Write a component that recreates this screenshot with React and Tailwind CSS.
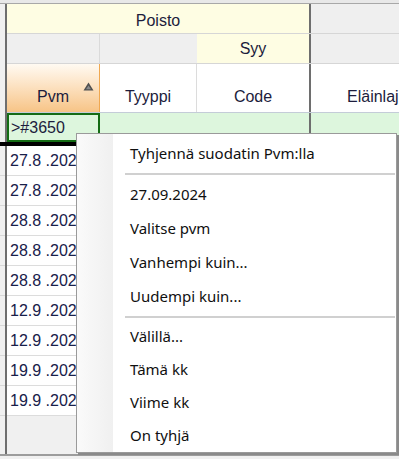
import React from "react";

const rows = [
  "27.8 .202",
  "27.8 .202",
  "28.8 .202",
  "28.8 .202",
  "28.8 .202",
  "12.9 .202",
  "12.9 .202",
  "19.9 .202",
  "19.9 .202",
];

const MenuItem = ({ label, h }) => (
  <div className={`flex items-center pl-[53px] ${h}`}>{label}</div>
);

const Separator = () => (
  <div className="flex h-[7px] items-center pl-[48px] pr-[1px]">
    <div className="h-[2px] w-full bg-[#d0d0d0]" />
  </div>
);

export default function App() {
  return (
    <div className="relative h-[459px] w-[399px] overflow-hidden bg-[#f0f0f0] font-['Liberation_Sans',Arial,sans-serif] text-[16px] text-[#1c1c3c]">
      {/* top strip */}
      <div className="h-[4px] bg-[#e8e8e8] border-b border-[#a8a8a8]" />

      <div className="flex">
        {/* row header column */}
        <div className="w-[5px] shrink-0" />
        <div className="w-[2px] shrink-0 bg-[#6e6e6e]" />

        <div className="flex-1">
          {/* group header row */}
          <div className="flex h-[30px] border-b border-[#d6d6d6]">
            <div className="flex w-[302px] items-center justify-center bg-[#fefde3] pt-[4px]">
              Poisto
            </div>
            <div className="w-[2px] bg-[#6e6e6e]" />
            <div className="flex-1 bg-[#efefef]" />
          </div>

          {/* sub header row */}
          <div className="flex h-[30px] border-b border-[#d6d6d6]">
            <div className="w-[93px] border-r border-[#dadada] bg-[#efefef]" />
            <div className="w-[97px] bg-[#efefef]" />
            <div className="flex w-[112px] items-center justify-center bg-[#fefde3]">
              Syy
            </div>
            <div className="w-[2px] bg-[#6e6e6e]" />
            <div className="flex-1 bg-[#efefef]" />
          </div>

          {/* column header row */}
          <div className="flex h-[49px] border-b border-[#c4ccd8]">
            <div className="relative flex w-[93px] items-end justify-center border-r border-[#f0a850] bg-gradient-to-b from-[#fffaf2] to-[#f7c486] pb-[3px]">
              Pvm
              <svg
                className="absolute right-[5px] top-[18px]"
                width="11"
                height="9"
                viewBox="0 0 11 9"
              >
                <polygon points="5.5,0.5 10.5,8.5 0.5,8.5" fill="#4f4f4f" />
                <polygon points="5.5,3.5 8,7.2 3,7.2" fill="#8a8a8a" />
              </svg>
            </div>
            <div className="flex w-[97px] items-end justify-center border-r border-[#dcdcdc] bg-white pb-[3px]">
              Tyyppi
            </div>
            <div className="flex w-[112px] items-end justify-center bg-white pb-[3px]">
              Code
            </div>
            <div className="w-[2px] bg-[#6e6e6e]" />
            <div className="flex flex-1 items-end overflow-hidden whitespace-nowrap bg-white pb-[3px] pl-[36px]">
              Eläinlaji
            </div>
          </div>

          {/* filter row */}
          <div className="flex h-[29px] bg-[#ddf6dd]">
            <div className="flex w-[93px] items-center border-2 border-[#146c14] pl-[2px] leading-none">
              &gt;#3650
            </div>
            <div className="w-[97px]" />
            <div className="w-[112px]" />
            <div className="w-[2px] bg-[#6e6e6e]" />
            <div className="flex-1" />
          </div>
        </div>
      </div>

      {/* thick separator */}
      <div className="h-[4px] bg-black" />

      {/* data rows */}
      <div className="flex">
        <div className="w-[5px] shrink-0">
          {rows.map((r, i) => (
            <div key={i} className="h-[30px] border-b border-[#d8d8d8]" />
          ))}
        </div>
        <div className="w-[2px] shrink-0 bg-[#6e6e6e]" />
        <div className="flex-1 bg-white">
          {rows.map((r, i) => (
            <div
              key={i}
              className="flex h-[30px] items-center border-b border-[#dcdcdc] pl-[3px] text-[#18204a]"
            >
              {r}4
            </div>
          ))}
        </div>
      </div>

      {/* bottom area */}
      <div className="flex h-[38px]">
        <div className="w-[5px]" />
        <div className="w-[2px] bg-[#6e6e6e]" />
        <div className="flex-1 bg-[#f0f0f0]" />
      </div>
      <div className="h-[2px] bg-[#9c9c9c]" />

      {/* context menu */}
      <div className="absolute left-[76px] top-[133px] flex w-[321px] border border-[#9a9a9a] bg-white pt-[2px] font-['Noto_Sans',sans-serif] text-[15px] text-[#101010] shadow-[2px_2px_0_#8a8a8a]">
        <div className="absolute bottom-0 left-0 top-0 w-[36px] bg-gradient-to-r from-[#fafafa] to-[#f0f0f0]" />
        <div className="relative flex-1">
          <MenuItem label="Tyhjennä suodatin Pvm:lla" h="h-[34px]" />
          <Separator />
          <MenuItem label="27.09.2024" h="h-[34px]" />
          <MenuItem label="Valitse pvm" h="h-[34px]" />
          <MenuItem label="Vanhempi kuin..." h="h-[34px]" />
          <MenuItem label="Uudempi kuin..." h="h-[34px]" />
          <Separator />
          <MenuItem label="Välillä..." h="h-[33px]" />
          <MenuItem label="Tämä kk" h="h-[33px]" />
          <MenuItem label="Viime kk" h="h-[33px]" />
          <MenuItem label="On tyhjä" h="h-[33px]" />
        </div>
      </div>
    </div>
  );
}
